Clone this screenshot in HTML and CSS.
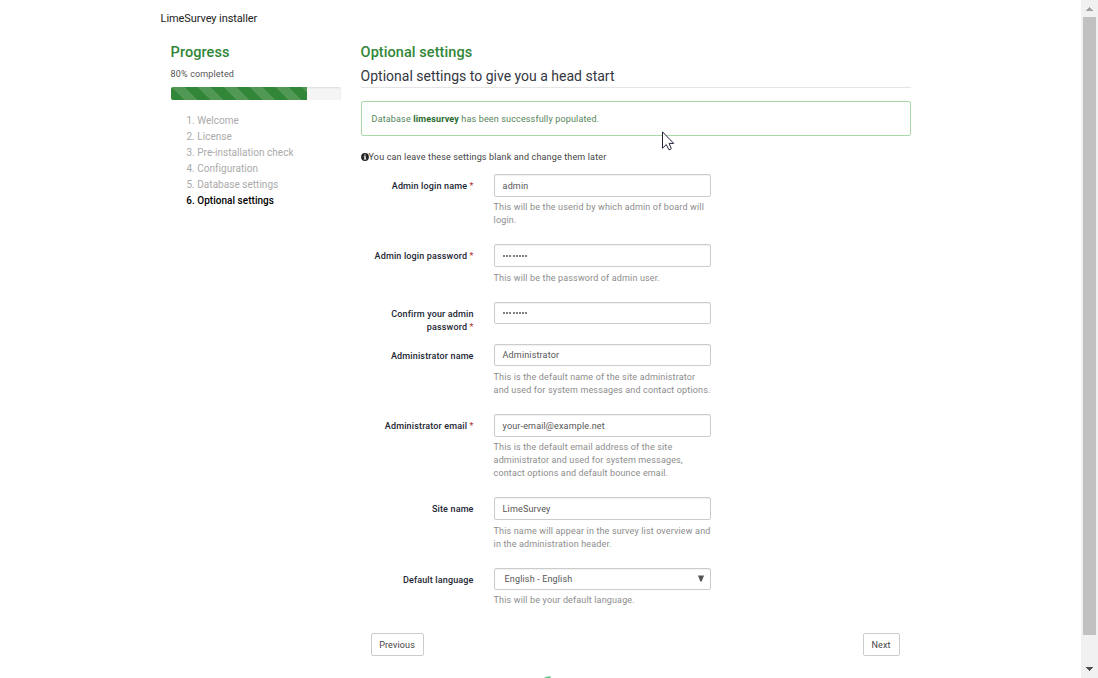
FILE: index.html
```html
<!DOCTYPE html>
<html lang="en">
<head>
<meta charset="utf-8">
<title>LimeSurvey installer</title>
<link rel="stylesheet" href="styles.css">
</head>
<body>
<div class="window">
  <div class="page">
    <header class="brand"><span>LimeSurvey installer</span></header>
    <div class="columns">
      <aside class="sidebar">
        <h3 class="title">Progress</h3>
        <p class="completed">80% completed</p>
        <div class="progress"><div class="bar"></div></div>
        <ol class="steps">
          <li>Welcome</li>
          <li>License</li>
          <li>Pre-installation check</li>
          <li>Configuration</li>
          <li>Database settings</li>
          <li class="current">Optional settings</li>
        </ol>
      </aside>
      <main class="main">
        <h3 class="title">Optional settings</h3>
        <div class="subtitle"><span>Optional settings to give you a head start</span></div>
        <div class="alert"><span>Database <b>limesurvey</b> has been successfully populated.</span></div>
        <p class="info"><svg width="8" height="8" viewBox="0 0 16 16"><circle cx="8" cy="8" r="7.8" fill="#222"/><path d="M6.5 2.8h3v2.4h-3zM5.4 6.4h4.2v5h1.2v1.7H5.4v-1.7h1.3V8.1H5.4z" fill="#fff"/></svg><span>You can leave these settings blank and change them later</span></p>
        <form class="form">
          <div class="row r1"><label>Admin login name <i>*</i></label><div class="field"><div class="control">admin</div><p class="help">This will be the userid by which admin of board will<br>login.</p></div></div>
          <div class="row r2"><label>Admin login password <i>*</i></label><div class="field"><div class="control password"><s></s><s></s><s></s><s></s><s></s><s></s><s></s><s></s></div><p class="help low">This will be the password of admin user.</p></div></div>
          <div class="row r3"><label>Confirm your admin<br>password <i>*</i></label><div class="field"><div class="control short password"><s></s><s></s><s></s><s></s><s></s><s></s><s></s><s></s></div></div></div>
          <div class="row r4"><label>Administrator name</label><div class="field"><div class="control short">Administrator</div><p class="help low">This is the default name of the site administrator<br>and used for system messages and contact options.</p></div></div>
          <div class="row r5"><label>Administrator email <i>*</i></label><div class="field"><div class="control">your-email@example.net</div><p class="help">This is the default email address of the site<br>administrator and used for system messages,<br>contact options and default bounce email.</p></div></div>
          <div class="row r6"><label>Site name</label><div class="field"><div class="control">LimeSurvey</div><p class="help low">This name will appear in the survey list overview and<br>in the administration header.</p></div></div>
          <div class="row r7"><label>Default language</label><div class="field"><div class="control short select"><span>English - English</span><svg width="6" height="7" viewBox="0 0 6 7"><path d="M0 0.5h6L3.7 6.5H2.3z" fill="#555"/></svg></div><p class="help">This will be your default language.</p></div></div>
        </form>
        <div class="actions"><button type="button" class="prev">Previous</button><button type="button" class="next">Next</button></div>
      </main>
    </div>
    <svg class="logo" width="10" height="3" viewBox="0 0 10 3"><path d="M0 2.7Q2 .3 8 .3L7 2.2Q4 2 3 3H0z" fill="#56c47e"/></svg>
  </div>
  <div class="scrollbar">
    <svg width="17" height="17" viewBox="0 0 17 17" shape-rendering="crispEdges"><path d="M8 7h1v1h1v1h1v1h1v1H5v-1h1V9h1V8h1z" fill="#a3a3a3"/></svg>
    <div class="thumb"></div>
    <svg class="down" width="17" height="17" viewBox="0 0 17 17" shape-rendering="crispEdges"><path d="M5 6h7v1h-1v1h-1v1H9v1H8V9H7V8H6V7H5z" fill="#505050"/></svg>
  </div>
</div>
<svg class="cursor" width="13" height="20" viewBox="0 0 13 20"><path d="M.5 .8V17.2L4.3 13.6L6.8 18.6Q8 19.2 9.3 17.7L7.1 12.4H11.7Z" fill="#fff" stroke="#25253a"/></svg>
</body>
</html>
```

FILE: styles.css
```css
* { box-sizing: border-box; }
body { margin: 0; background: #fff; color: #333641; font: 9px/13px Roboto, sans-serif; letter-spacing: .15px; overflow: hidden; }
p, h3, ol { margin: 0; padding: 0; }
.window { display: flex; height: 678px; }
.page { flex: 1; padding-left: 160.6px; overflow: hidden; }
.brand { height: 36px; padding-top: 11px; font-size: 11px; line-height: 15px; letter-spacing: -.09px; color: #222; }
.columns { display: flex; gap: 20px; height: 640px; padding-left: 10px; }
.sidebar { width: 170px; }
.main { width: 550px; }
.title { height: 30px; padding-top: 7px; font-size: 14.5px; line-height: 20px; font-weight: 500; letter-spacing: .07px; color: #328637; }
.completed { height: 21px; padding-top: 2px; color: #555; }
.progress { height: 13px; border-radius: 2px; overflow: hidden; background: #f5f5f5; box-shadow: inset 0 1px 2px rgba(0,0,0,.1); }
.bar { width: 80%; height: 13px; background: linear-gradient(45deg, rgba(255,255,255,.15) 25%, transparent 25%, transparent 50%, rgba(255,255,255,.15) 50%, rgba(255,255,255,.15) 75%, transparent 75%) 0 0 / 26px 26px #328637; }
.steps { margin-top: 13px; padding-left: 26.7px; font-size: 10px; line-height: 16px; letter-spacing: .03px; color: #aaa; }
.current { color: #000; font-weight: 500; }
.subtitle { height: 22px; padding-top: 1px; border-bottom: 1px solid #e5e5e5; font-size: 14px; line-height: 18px; letter-spacing: 0; }
.alert { height: 35px; margin-top: 13px; padding: 11px 10px; border: 1px solid #a9d9a9; border-radius: 2px; color: #56845a; }
.alert b { color: #286b2d; font-weight: 700; }
.info { display: flex; align-items: center; height: 13px; margin-top: 15px; color: #444; }
.info svg { margin-top: -1px; }
.form { margin-top: 10px; }
.row { display: flex; gap: 20px; }
.row label { width: 113px; padding-top: 6px; text-align: right; font-weight: 500; white-space: nowrap; color: #222632; }
.row i { color: #a33; font-style: normal; font-weight: 400; }
.field { width: 217px; }
.control { height: 23px; padding: 5px 8px; border: 1px solid #ccc; border-radius: 2px; color: #555; box-shadow: inset 0 1px 1px rgba(0,0,0,.06); }
.short { height: 22px; padding-top: 4px; }
.password { display: flex; align-items: center; gap: 1.2px; padding: 0 8.5px; }
.password s { width: 2px; height: 2px; border-radius: 1px; background: #555; }
.select { display: flex; justify-content: space-between; padding: 4px 6px 4px 10px; }
.select svg { margin-top: 2px; }
.help { margin-top: 4px; white-space: nowrap; color: #8c8c8c; }
.help.low { margin-top: 5px; }
.r1 { height: 70px; }
.r2 { height: 58px; }
.r3 { height: 42px; }
.r4 { height: 70px; }
.r5 { height: 83px; }
.r6 { height: 71px; }
.r7 { height: 65px; }
.actions { display: flex; justify-content: space-between; padding: 0 11px 0 10px; }
.actions button { height: 23px; padding: 1px 0 0; border: 1px solid #ccc; border-radius: 2px; background: #fff; color: #444; font: inherit; letter-spacing: inherit; }
.prev { width: 53px; }
.next { width: 37px; }
.logo { display: block; margin-left: 382px; }
.scrollbar { display: flex; flex-direction: column; width: 17px; background: #f1f1f1; }
.thumb { height: 618px; margin: 0 2px; background: #c1c1c1; }
.down { margin-top: auto; }
.cursor { position: absolute; left: 662px; top: 131px; }
```
